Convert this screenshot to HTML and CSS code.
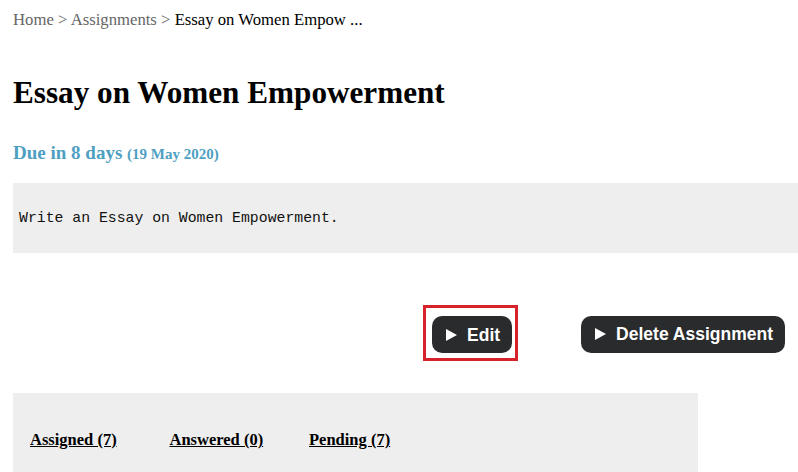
FILE: index.html
```html
<!DOCTYPE html>
<html>
<head>
<meta charset="utf-8">
<link rel="stylesheet" href="styles.css">
</head>
<body>
<div class="page">
  <nav class="crumbs"><a href="#">Home</a> &gt; <a href="#">Assignments</a> &gt; <span class="current">Essay on Women Empow ...</span></nav>
  <h1 class="title">Essay on Women Empowerment</h1>
  <div class="due">Due in 8 days <span class="date">(19 May 2020)</span></div>
  <div class="desc"><pre>Write an Essay on Women Empowerment.</pre></div>
  <div class="actions">
    <span class="highlight"><button class="btn"><svg class="tri" viewBox="0 0 11 12" width="11" height="12"><path d="M0 0 L11 6 L0 12 Z" fill="#fff"/></svg><span>Edit</span></button></span>
    <button class="btn"><svg class="tri" viewBox="0 0 11 12" width="11" height="12"><path d="M0 0 L11 6 L0 12 Z" fill="#fff"/></svg><span>Delete Assignment</span></button>
  </div>
  <div class="tabs">
    <span class="tab"><a href="#">Assigned (7)</a></span>
    <span class="tab"><a href="#">Answered (0)</a></span>
    <span class="tab"><a href="#">Pending (7)</a></span>
  </div>
</div>
</body>
</html>
```
FILE: styles.css
```css
html, body {
  margin: 0;
  padding: 0;
  background: #fff;
  overflow: hidden;
}
.page {
  padding: 0 0 0 13px;
  font-family: "Liberation Serif", "Times New Roman", serif;
  color: #000;
}
.crumbs {
  padding-top: 11px;
  font-size: 16.7px;
  line-height: 18px;
  color: #666;
}
.crumbs a {
  color: #666;
  text-decoration: none;
}
.crumbs .current {
  color: #000;
}
.title {
  margin: 45px 0 0;
  font-size: 31.2px;
  line-height: 37px;
  font-weight: bold;
}
.due {
  margin-top: 31px;
  font-size: 19px;
  line-height: 22px;
  font-weight: bold;
  color: #4e9fc2;
}
.due .date {
  font-size: 15px;
}
.desc {
  margin-top: 18px;
  background: #eeeeee;
  height: 70px;
  display: flex;
  align-items: center;
  padding-left: 6px;
}
.desc pre {
  margin: 0;
  font-family: "Liberation Mono", "DejaVu Sans Mono", monospace;
  font-size: 14.8px;
  line-height: 18px;
  color: #111;
}
.actions {
  margin-top: 53px;
  display: flex;
  align-items: center;
  justify-content: flex-end;
  gap: 63px;
  padding-right: 13px;
  height: 56px;
}
.highlight {
  display: inline-flex;
  border: 3px solid #d8222b;
  padding: 8px 3px 5px 6px;
  margin-top: -2px;
}
.btn {
  display: inline-flex;
  align-items: center;
  gap: 10px;
  background: #2a2b2d;
  color: #fff;
  border: none;
  border-radius: 10px;
  font-family: "Liberation Sans", Arial, sans-serif;
  font-weight: bold;
  font-size: 17.5px;
  line-height: 22px;
  padding: 0 12px 0 14px;
  height: 37px;
}
.tri {
  display: block;
  flex: none;
}
.tabs {
  margin-top: 31px;
  width: 685px;
  height: 80px;
  background: #eeeeee;
  display: flex;
  align-items: flex-start;
  padding: 37px 0 0 17px;
  box-sizing: border-box;
}
.tab {
  width: 139.5px;
  font-size: 16.5px;
  line-height: 20px;
  font-weight: bold;
}
.tab a {
  color: #000;
  text-decoration: underline;
}
```
